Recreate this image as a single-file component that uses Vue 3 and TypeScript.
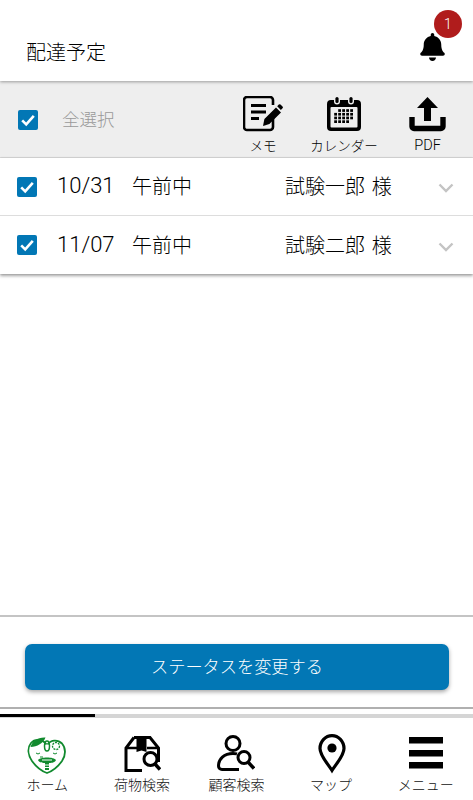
<script setup lang="ts">
interface Row { date: string; name: string }
const rows: Row[] = [
  { date: '10/31', name: '試験一郎 様' },
  { date: '11/07', name: '試験二郎 様' },
]
const calCells: number[][] = []
for (let r = 0; r < 4; r++) for (let c = 0; c < 5; c++) {
  if ((r === 0 && c === 0) || (r === 3 && c === 4)) continue
  calCells.push([7.2 + c * 4, 13.2 + r * 3.7])
}
</script>

<template>
  <div class="page">
    <header class="header">
      <h1 class="title">配達予定</h1>
      <div class="bell-wrap">
        <svg class="bell" viewBox="0 0 448 512"><path d="M224 512c35.32 0 63.97-28.65 63.97-64H160.03c0 35.35 28.65 64 63.97 64zm215.39-149.71c-19.32-20.76-55.47-51.99-55.47-154.29 0-77.7-54.48-139.9-127.94-155.16V32c0-17.67-14.32-32-31.98-32s-31.98 14.33-31.98 32v20.84C118.56 68.1 64.08 130.3 64.08 208c0 102.3-36.15 133.53-55.47 154.29-6 6.45-8.66 14.16-8.61 21.71.11 16.4 12.98 32 32.1 32h383.8c19.12 0 32-15.6 32.1-32 .05-7.55-2.61-15.27-8.61-21.71z"/></svg>
        <span class="badge">1</span>
      </div>
    </header>

    <section class="toolbar">
      <span class="check"><svg viewBox="0 0 20 20"><path d="M4.2 10.4l4 4 7.6-8.6" /></svg></span>
      <span class="select-all">全選択</span>
      <div class="tools">
        <div class="tool tool-memo">
          <svg class="ic" width="40" height="36" viewBox="0 0 40 36">
            <path d="M30 20v11a3 3 0 0 1-3 3H4a3 3 0 0 1-3-3V4a3 3 0 0 1 3-3h23a3 3 0 0 1 3 3v5" fill="none" stroke="#000" stroke-width="2.6"/>
            <path d="M8 9.5h15M8 16h15M8 22.5h8" fill="none" stroke="#000" stroke-width="3"/>
            <path d="M20 30l1.4-7L33 11.4l5 5L26.4 28zM34.2 10.2l1.6-1.6a1.2 1.2 0 0 1 1.7 0l2 2a1.2 1.2 0 0 1 0 1.7l-1.6 1.6z"/>
          </svg>
          <span>メモ</span>
        </div>
        <div class="tool tool-cal">
          <svg class="ic" width="34" height="36" viewBox="0 0 34 36">
            <path d="M4 4h3v1.5a3 3 0 0 0 6 0V4h8v1.5a3 3 0 0 0 6 0V4h3a4 4 0 0 1 4 4v23a4 4 0 0 1-4 4H4a4 4 0 0 1-4-4V8a4 4 0 0 1 4-4z"/>
            <rect x="8.4" y="1" width="3.2" height="6" rx="1.6"/>
            <rect x="22.4" y="1" width="3.2" height="6" rx="1.6"/>
            <rect x="3.5" y="11" width="27" height="20.500" rx="1" fill="#eee"/>
            <rect v-for="(c, i) in calCells" :key="i" :x="c[0]" :y="c[1]" width="2.8" height="2.7"/>
          </svg>
          <span>カレンダー</span>
        </div>
        <div class="tool tool-pdf">
          <svg class="ic" width="37" height="36" viewBox="0 0 37 36">
            <path d="M18.5 1L29 12h-7v13h-7V12H8z"/>
            <path d="M3 21v9.5a2 2 0 0 0 2 2h27a2 2 0 0 0 2-2V21" fill="none" stroke="#000" stroke-width="5.4"/>
          </svg>
          <span class="pdf">PDF</span>
        </div>
      </div>
    </section>

    <ul class="rows">
      <li v-for="row in rows" :key="row.date" class="row">
        <span class="check"><svg viewBox="0 0 20 20"><path d="M4.2 10.4l4 4 7.6-8.6" /></svg></span>
        <span class="date">{{ row.date }}</span>
        <span class="slot">午前中</span>
        <span class="name">{{ row.name }}</span>
        <svg class="chev" viewBox="0 0 16 10"><path d="M1.5 1.5L8 8l6.500-6.500"/></svg>
      </li>
    </ul>

    <div class="spacer"></div>

    <div class="action">
      <button class="primary" type="button">ステータスを変更する</button>
    </div>

    <div class="progress"><div class="progress-on"></div></div>

    <nav class="nav">
      <div class="nav-item">
        <svg class="nav-ic" width="40" height="40" viewBox="0 -2 40 40">
          <path d="M19.500 8.500C16 3 8 2.500 4 7c-4 5-3 12 1 18 3.500 5 9 10 15 12 6-2 11.500-7 15-12 4-6 4-13 0-17.500C31 3.500 24 3.500 20.500 8.500" fill="none" stroke="#118a2e" stroke-width="1.800"/>
          <path d="M3.500 11C5 5 11 1 18.500 1.500 16.500 7 10 11 3.500 11z" fill="#118a2e"/>
          <ellipse cx="20" cy="10" rx="2.500" ry="5" fill="none" stroke="#118a2e" stroke-width="1.500"/>
          <circle cx="29" cy="10" r="3.500" fill="none" stroke="#118a2e" stroke-width="1.300" stroke-dasharray="2 1"/>
          <path d="M9 17q2 2 4 0M26 17q2 2 4 0M13 21h3" fill="none" stroke="#118a2e" stroke-width="1"/>
          <path d="M11 24c2-3.500 16-3.500 18 0-1 3-6 3-7 3v7h-4v-7c-1 0-6 0-7-3z" fill="#118a2e"/>
          <path d="M15 24h10M17 29h6M17 31.500h6" stroke="#fff" stroke-width="1"/>
        </svg>
        <span>ホーム</span>
      </div>
      <div class="nav-item">
        <svg class="nav-ic" width="38" height="40" viewBox="0 -2 38 40">
          <path d="M11 1.500h16l8.500 10.500v14M19 34.500H3V12L11 1.500" fill="none" stroke="#000" stroke-width="3"/>
          <path d="M3 12h11M24 12h11" stroke="#000" stroke-width="2.600"/>
          <path d="M13.500 0h10v16l-5-1.500-5 1.500z"/>
          <circle cx="27.500" cy="23" r="6.500" fill="#fff" stroke="#000" stroke-width="3"/>
          <path d="M32 28l5 5.500" stroke="#000" stroke-width="3.400"/>
        </svg>
        <span>荷物検索</span>
      </div>
      <div class="nav-item">
        <svg class="nav-ic" width="38" height="40" viewBox="0 -2 38 40">
          <circle cx="16" cy="7.500" r="7" fill="none" stroke="#000" stroke-width="3"/>
          <path d="M22 33.500H5c-2 0-3.500-1.500-3.500-3.500C1.500 23 7 17.500 16 17.500c1.500 0 3 .1 4 .4" fill="none" stroke="#000" stroke-width="3"/>
          <circle cx="27" cy="21.500" r="6" fill="#fff" stroke="#000" stroke-width="3"/>
          <path d="M31 26l6 6.500" stroke="#000" stroke-width="3.400"/>
        </svg>
        <span>顧客検索</span>
      </div>
      <div class="nav-item">
        <svg class="nav-ic map" width="30" height="40" viewBox="0 0 30 40">
          <path d="M16 36.500C10.500 28 4 21.500 4 14.500 4 7.500 9.500 1.600 16 1.600s12 5.900 12 12.900c0 7-6.500 13.500-12 22z" fill="none" stroke="#000" stroke-width="3.200"/>
          <circle cx="16" cy="14" r="4.600"/>
        </svg>
        <span>マップ</span>
      </div>
      <div class="nav-item">
        <svg class="nav-ic" width="34" height="40" viewBox="0 -2 34 40">
          <path d="M0 1h34v6.500H0zM0 14h34v6.500H0zM0 26h34v6.500H0z"/>
        </svg>
        <span>メニュー</span>
      </div>
    </nav>
  </div>
</template>

<style>
html, body { margin: 0; background: #fff; }
</style>

<style scoped>
.page {
  width: 473px;
  height: 800px;
  display: flex;
  flex-direction: column;
  overflow: hidden;
  background: #fff;
  color: #000;
  font-family: Roboto, "Noto Sans CJK JP", sans-serif;
  font-weight: 300;
}
.header {
  height: 81px;
  flex: none;
  display: flex;
  align-items: flex-start;
  justify-content: space-between;
  padding: 0 28px 0 26px;
  box-sizing: border-box;
  position: relative;
  z-index: 2;
  box-shadow: 0 1px 3px rgba(0, 0, 0, .35);
}
.title {
  margin: 39px 0 0;
  font-size: 20px;
  font-weight: 300;
  line-height: 29px;
}
.bell-wrap { position: relative; margin-top: 33px; width: 25px; height: 28px; }
.bell { display: block; width: 25px; height: 28px; fill: #000; }
.badge {
  position: absolute;
  left: 14px;
  top: -23px;
  width: 28px;
  height: 28px;
  border-radius: 50%;
  background: #b01c1c;
  color: #fff;
  font-size: 14px;
  line-height: 28px;
  text-align: center;
}
.toolbar {
  height: 77px;
  flex: none;
  background: #eee;
  display: flex;
  align-items: flex-start;
  box-sizing: border-box;
  padding-left: 18px;
  border-bottom: 1px solid #ddd;
}
.check {
  width: 20px;
  height: 20px;
  flex: none;
  border-radius: 2px;
  background: #0277b5;
  display: block;
}
.check svg { display: block; width: 20px; height: 20px; fill: none; stroke: #fff; stroke-width: 2.600; }
.toolbar .check { margin-top: 29px; }
.select-all {
  margin: 27px 0 0 24px;
  font-size: 17.500px;
  line-height: 24px;
  color: #999;
}
.tools {
  margin-left: auto;
  display: flex;
}
.tool {
  display: flex;
  flex-direction: column;
  align-items: center;
  font-size: 13.500px;
  line-height: 18px;
  color: #000;
  padding-top: 15px;
}
.tool span { margin-top: 5px; white-space: nowrap; }
.tool .pdf { font-size: 14.500px; }
.tool .ic { display: block; fill: #000; }
.tool-memo { width: 40px; margin-right: 27px; }
.tool-cal { width: 68px; margin-right: 31px; }
.tool-pdf { width: 37px; margin-right: 27px; }
.rows {
  list-style: none;
  margin: 0;
  padding: 0;
  flex: none;
  box-shadow: 0 2px 3px rgba(0, 0, 0, .35), 0 0 2px rgba(0, 0, 0, .15);
}
.row {
  height: 58px;
  box-sizing: border-box;
  display: flex;
  align-items: center;
  padding: 0 0 2px 17px;
  border-bottom: 1px solid #ddd;
  font-size: 20px;
  color: #000;
}
.row .check { margin-top: 2px; }
.row:last-child { border-bottom: 0; }
.date { margin-left: 20px; width: 75px; font-size: 22px; }
.slot { width: 153px; }
.name { width: 144px; white-space: pre; word-spacing: 2px; }
.chev { width: 16px; height: 10px; fill: none; stroke: #c4c4c4; stroke-width: 2.400; margin-top: 5px; margin-left: 9px; }
.spacer { flex: 1; }
.action {
  flex: none;
  height: 94px;
  box-sizing: border-box;
  border-top: 2px solid #c4c4c4;
  border-bottom: 2px solid #b0b0b0;
  padding: 27px 24px 0 25px;
}
.primary {
  display: block;
  width: 100%;
  height: 46px;
  border: 0;
  border-radius: 7px;
  background: #0277b5;
  color: #fff;
  font: inherit;
  font-size: 17.200px;
  box-shadow: 0 2px 4px rgba(0, 0, 0, .35);
  padding: 0 0 3px;
}
.progress {
  flex: none;
  height: 4px;
  margin-top: 5px;
  background: #d5d5d5;
}
.progress-on { width: 95px; height: 3px; background: #000; }
.nav {
  flex: none;
  height: 82px;
  display: grid;
  grid-template-columns: repeat(5, 1fr);
}
.nav-item {
  display: flex;
  flex-direction: column;
  align-items: center;
  padding-top: 16px;
  font-size: 14px;
  line-height: 20px;
  color: #111;
}
.nav-ic { display: block; flex: none; }
.nav-item span { margin-top: 1px; white-space: nowrap; }
</style>
